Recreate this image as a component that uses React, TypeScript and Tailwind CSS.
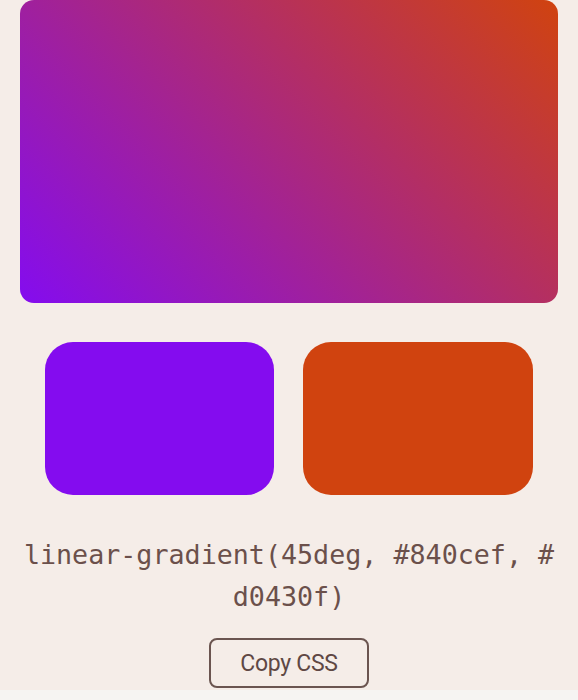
import React from 'react';

const from = '#840cef';
const to = '#d0430f';

export default function App() {
    const css = `linear-gradient(45deg, ${from}, ${to})`;

    return (
        <div className="min-h-screen bg-[#f6f4f2]">
            <div className="bg-[#f5ede8] px-5 pb-px">
                {/* Preview */}
                <div
                    className="h-[303px] w-full rounded-[14px]"
                    style={{ backgroundImage: css }}
                />

                {/* Swatches */}
                <div className="mt-[39px] flex justify-center gap-[29px]">
                    <div className="h-[153px] w-[229px] rounded-[28px]" style={{ backgroundColor: from }} />
                    <div className="h-[153px] w-[230px] rounded-[28px]" style={{ backgroundColor: to }} />
                </div>

                <p className="mt-[39px] break-all text-center font-['DejaVu_Sans_Mono',monospace] text-[26.7px] leading-[42px] text-[#6b504b]">
                    {css}
                </p>

                <div className="mt-5 mb-px flex justify-center">
                    <button
                        type="button"
                        className="h-[50px] w-[160px] rounded-lg border-2 border-[#6b5550] pt-[3px] font-['Roboto',sans-serif] text-[23px] tracking-[-0.3px] text-[#5f4844]"
                    >
                        Copy CSS
                    </button>
                </div>
            </div>
        </div>
    );
}
